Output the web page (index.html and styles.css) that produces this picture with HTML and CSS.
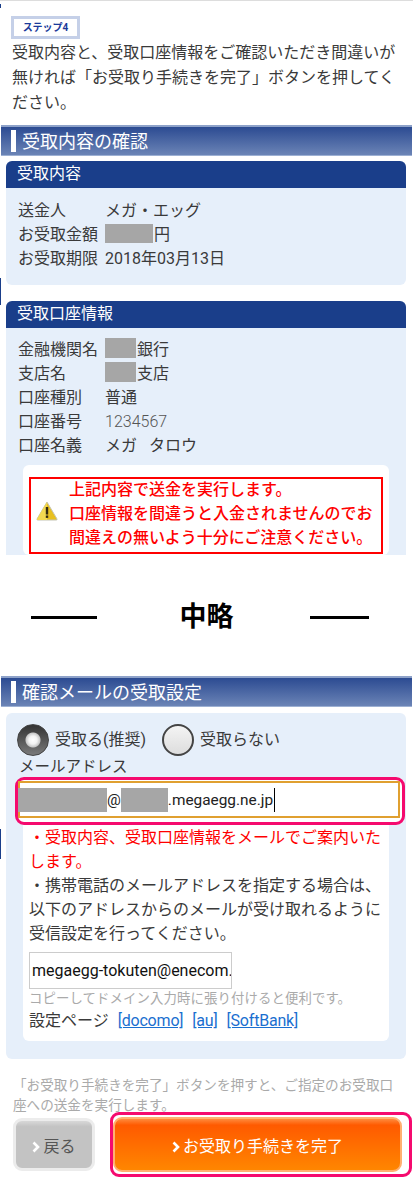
FILE: index.html
```html
<!DOCTYPE html>
<html lang="ja">
<head>
    <meta charset="UTF-8">
    <meta name="viewport" content="width=device-width, initial-scale=1.0">
    <title>受取手続き</title>
    <link rel="stylesheet" href="styles.css">
</head>
<body>
    <span class="edge edge-a"></span>
    <span class="edge edge-b"></span>
    <span class="edge edge-c"></span>

    <div class="step"><span class="step-label">ステップ4</span></div>
    <p class="lead">受取内容と、受取口座情報をご確認いただき間違いが無ければ「お受取り手続きを完了」ボタンを押してください。</p>

    <h2 class="section-head">受取内容の確認</h2>
    <div class="card">
        <h3 class="card-head">受取内容</h3>
        <div class="rows rows-first">
            <span>送金人</span><span>メガ・エッグ</span>
            <span>お受取金額</span><span><i class="mask mask-amount"></i>円</span>
            <span>お受取期限</span><span>2018年03月13日</span>
        </div>
    </div>

    <div class="card card-cut">
        <h3 class="card-head">受取口座情報</h3>
        <div class="rows rows-second">
            <span>金融機関名</span><span><i class="mask mask-bank"></i>銀行</span>
            <span>支店名</span><span><i class="mask mask-bank"></i>支店</span>
            <span>口座種別</span><span>普通</span>
            <span>口座番号</span><span class="number">1234567</span>
            <span>口座名義</span><span>メガ&nbsp;&nbsp;&nbsp;タロウ</span>
        </div>
        <div class="inner inner-warning">
            <div class="warning">
                <svg class="warning-icon" width="22" height="20" viewBox="0 0 22 20">
                    <path d="M11 1 L21 18 Q21.500 19 20 19 L2 19 Q0.500 19 1 18 Z" fill="#e8c020" stroke="#c4c4b4" stroke-width="1"/>
                    <path d="M11 1 L11 19 L2 19 Q0.500 19 1 18 Z" fill="#f2d850"/>
                    <rect x="9.800" y="6" width="2.400" height="7.500" fill="#332b10"/>
                    <rect x="9.800" y="14.500" width="2.400" height="2.400" fill="#332b10"/>
                </svg>
                <p>上記内容で送金を実行します。<br>口座情報を間違うと入金されませんのでお間違えの無いよう十分にご注意ください。</p>
            </div>
        </div>
    </div>

    <div class="omit">
        <span class="omit-line omit-left"></span>
        <strong>中略</strong>
        <span class="omit-line omit-right"></span>
    </div>

    <h2 class="section-head section-mail">確認メールの受取設定</h2>
    <div class="card card-mail">
        <div class="radios">
            <span class="radio radio-on"></span><span class="radio-text">受取る(推奨)</span>
            <span class="radio"></span><span class="radio-text">受取らない</span>
        </div>
        <div class="mail-label">メールアドレス</div>
        <div class="mail-wrap">
            <div class="mail-input"><i class="mask mask-user"></i>@<i class="mask mask-domain"></i>.megaegg.ne.jp<i class="caret"></i></div>
        </div>
        <div class="inner inner-mail">
            <p class="red">・受取内容、受取口座情報をメールでご案内いたします。</p>
            <p>・携帯電話のメールアドレスを指定する場合は、以下のアドレスからのメールが受け取れるように受信設定を行ってください。</p>
            <div class="copy-box">megaegg-tokuten@enecom.</div>
            <p class="hint">コピーしてドメイン入力時に張り付けると便利です。</p>
            <p class="links">設定ページ <a href="#">[docomo]</a> <a href="#">[au]</a> <a href="#">[SoftBank]</a></p>
        </div>
    </div>

    <p class="note">「お受取り手続きを完了」ボタンを押すと、ご指定のお受取口座への送金を実行します。</p>
    <div class="buttons">
        <button class="btn btn-back"><svg class="chev" width="8" height="12" viewBox="0 0 8 12"><path d="M1.500 1.500 L6 6 L1.500 10.500" fill="none" stroke="#fff" stroke-width="2.600"/></svg>戻る</button>
        <div class="done-wrap">
            <button class="btn btn-done"><svg class="chev" width="8" height="12" viewBox="0 0 8 12"><path d="M1.500 1.500 L6 6 L1.500 10.500" fill="none" stroke="#fff" stroke-width="2.600"/></svg>お受取り手続きを完了</button>
        </div>
    </div>
</body>
</html>
```

FILE: styles.css
```css
body {
    position: relative;
    margin: 0;
    padding: 0;
    height: 1195px;
    overflow: hidden;
    background-color: white;
    color: #3a3a3a;
    border-top: 1px solid #ddd;
    box-sizing: border-box;
    font-family: Roboto, "Noto Sans CJK JP", sans-serif;
    font-size: 16px;
}

p {
    margin: 0;
}

/* small marks left on the window edge */
.edge {
    position: absolute;
    left: 0;
    width: 1px;
    background-color: #1a3e8a;
}

.edge-a {
    top: 3px;
    height: 4px;
}

.edge-b {
    top: 277px;
    height: 27px;
}

.edge-c {
    top: 828px;
    height: 30px;
}

.step {
    margin: 15px 0 0 11px;
    height: 23px;
}

.step-label {
    display: inline-block;
    box-sizing: border-box;
    width: 69px;
    height: 23px;
    border: 3px solid #c5d0e8;
    color: #1a3a9a;
    font-size: 10px;
    font-weight: 700;
    line-height: 18px;
    text-align: center;
}

.lead {
    margin: 1px 10px 0 12px;
    line-height: 25px;
}

.section-head {
    margin: 10px 1px 0;
    height: 31px;
    box-sizing: border-box;
    border-top: 2px solid #8ea2c9;
    border-bottom: 1px solid #9db0d3;
    background: linear-gradient(#2c4b92, #6b84b6);
    color: white;
    font-size: 18px;
    font-weight: 400;
    line-height: 27px;
    display: flex;
    align-items: center;
}

.section-head::before {
    content: "";
    width: 5px;
    height: 22px;
    margin: 0 6px 0 10px;
    background-color: white;
}

.card {
    margin: 5px 7px 0 6px;
    background-color: #e6effa;
    border-radius: 6px;
    height: 124px;
    overflow: hidden;
}

.card-head {
    margin: 0;
    height: 27px;
    padding-left: 11px;
    background-color: #1a3e8a;
    color: white;
    font-size: 16px;
    font-weight: 400;
    line-height: 25px;
}

.card-cut {
    margin-top: 16px;
    height: 254px;
    border-radius: 6px 6px 0 0;
}

.rows {
    display: grid;
    grid-template-columns: 87px 1fr;
    padding-left: 12px;
    line-height: 24px;
}

.rows-first {
    margin-top: 10px;
    padding-top: 1px;
}

.rows-second {
    margin-top: 10px;
}

.number {
    font-weight: 300;
    color: #555;
}

.mask {
    display: inline-block;
    background-color: #a6a6a6;
}

.mask-amount {
    width: 48px;
    height: 19px;
    margin-right: 1px;
    vertical-align: -3px;
}

.mask-bank {
    width: 31px;
    height: 20px;
    margin-right: 1px;
    vertical-align: -3px;
}

.inner {
    background-color: white;
    border-radius: 6px;
}

.inner-warning {
    margin: 7px 17px 0;
    height: 90px;
    padding: 12px 6px 0;
    box-sizing: border-box;
}

.warning {
    box-sizing: border-box;
    height: 77px;
    padding-bottom: 4px;
    border: 2px solid #f00;
    display: flex;
    align-items: center;
    color: #f00;
    font-weight: 500;
    line-height: 24px;
}

.warning-icon {
    flex: none;
    margin: 0 11px 5px 5px;
}

.omit {
    position: relative;
    height: 121px;
    text-align: center;
}

.omit strong {
    display: block;
    padding-top: 46px;
    font-size: 27px;
    line-height: 32px;
    color: black;
}

.omit-line {
    position: absolute;
    top: 61px;
    height: 3px;
    background-color: black;
}

.omit-left {
    left: 31px;
    width: 66px;
}

.omit-right {
    left: 310px;
    width: 59px;
}

.section-mail {
    margin-top: 0;
}

.card-mail {
    height: 346px;
    margin-top: 6px;
    padding-top: 11px;
    box-sizing: border-box;
    overflow: visible;
}

.radios {
    display: flex;
    align-items: center;
    height: 32px;
    margin-left: 11px;
}

.radio {
    box-sizing: border-box;
    width: 32px;
    height: 32px;
    border-radius: 50%;
    border: 2px solid #444;
    background: linear-gradient(#f4f4f4, #ddd);
}

.radio-on {
    border: 1px solid #444;
    background: radial-gradient(circle, #fff 0, #f4f4f4 4px, #c8c8c8 7px, transparent 8px),
        linear-gradient(#333, #7a7a7a);
}

.radio-text {
    margin: 0 16px 0 6px;
    padding-bottom: 4px;
}

.mail-label {
    margin: 2px 0 0 13px;
    font-size: 15.500px;
    line-height: 19px;
}

.mail-wrap {
    margin: 0 1px 0 9px;
    height: 48px;
    border: 3px solid #f50a6e;
    border-radius: 9px;
    box-sizing: border-box;
    padding: 1px 2px 4px 0;
    background-color: white;
}

.mail-input {
    height: 37px;
    box-sizing: border-box;
    border: 2px solid #e0a030;
    display: flex;
    align-items: center;
    color: #222;
    font-size: 15.400px;
}

.mask-user {
    width: 89px;
    height: 24px;
    margin-left: -2px;
}

.mask-domain {
    width: 47px;
    height: 24px;
}

.caret {
    width: 1px;
    height: 24px;
    background-color: black;
    margin-left: 1px;
}

.inner-mail {
    margin: 0 17px;
    height: 216px;
    padding: 1px 6px 0;
    box-sizing: border-box;
    line-height: 24px;
    border-radius: 0 0 6px 6px;
}

.red {
    color: #f00;
}

.copy-box {
    box-sizing: border-box;
    width: 203px;
    height: 37px;
    margin-top: 6px;
    padding-left: 2px;
    border: 1px solid #ccc;
    color: #111;
    line-height: 35px;
    white-space: nowrap;
    overflow: hidden;
}

.hint {
    color: #aaa;
    font-size: 13.400px;
    letter-spacing: 0.100px;
    line-height: 20px;
}

.links {
    margin-top: 1px;
    line-height: 22px;
}

.links a {
    color: #1a6fd0;
    margin-left: 5px;
    letter-spacing: -0.200px;
}

.note {
    margin: 16px 14px 0 13px;
    color: #aaa;
    font-size: 13.600px;
    line-height: 20px;
}

.buttons {
    display: flex;
    align-items: center;
    margin: -3px 0 0 13px;
}

.btn {
    border: none;
    padding: 0;
    font-family: inherit;
    font-size: 16px;
    cursor: pointer;
}

.chev {
    margin-right: 3px;
    vertical-align: -1px;
}

.btn-back {
    width: 82px;
    height: 53px;
    border: 3px solid #ececec;
    border-radius: 9px;
    background: linear-gradient(#d8d8d8, #c3c3c3 12%);
    color: #555;
}

.done-wrap {
    margin-left: 15px;
    box-sizing: border-box;
    width: 302px;
    height: 65px;
    padding: 2px 7px 2px 0;
    border: 3px solid #f50a6e;
    border-radius: 9px;
    display: flex;
    flex-direction: column;
    align-items: flex-end;
    justify-content: center;
}

.btn-done {
    width: 289px;
    height: 55px;
    border: 2px solid #ffb070;
    border-radius: 9px;
    background: linear-gradient(#ff8a3c, #ff5a00 12%, #ff8600);
    color: white;
}
```
